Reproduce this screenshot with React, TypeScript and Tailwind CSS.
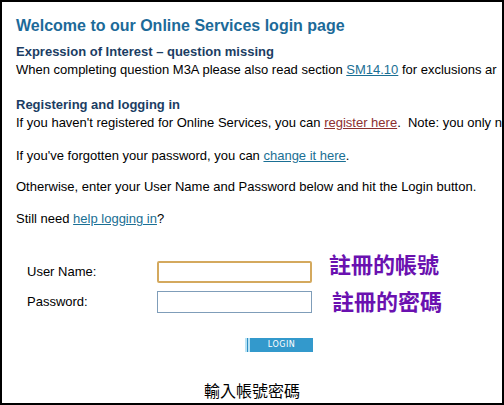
export default function App() {
  const body = "text-[13px] leading-4 text-black whitespace-nowrap";
  return (
    <div className="w-[504px] h-[405px] border-2 border-black bg-white overflow-hidden font-['Liberation_Sans',Arial,sans-serif] relative">
      <div className="pt-[14px] pl-[14px]">
        <h1 className="text-[16px] leading-5 font-bold text-[#1c6a99]">Welcome to our Online Services login page</h1>

        <h2 className="mt-[8px] text-[13px] leading-4 font-bold text-[#1b3d63]">Expression of Interest – question missing</h2>
        <p className={`mt-[2px] ${body}`}>
          When completing question M3A please also read section{' '}
          <a className="text-[#1a6f94] underline">SM14.10</a> for exclusions ar
        </p>

        <h2 className="mt-[19px] text-[13px] leading-4 font-bold text-[#1b3d63]">Registering and logging in</h2>
        <p className={`mt-[2px] ${body}`}>
          If you haven't registered for Online Services, you can{' '}
          <a className="text-[#8c2f2f] underline">register here</a>.&nbsp; Note: you only n
        </p>

        <p className={`mt-[17px] ${body}`}>
          If you've forgotten your password, you can <a className="text-[#1a6f94] underline">change it here</a>.
        </p>
        <p className={`mt-[15px] ${body}`}>
          Otherwise, enter your User Name and Password below and hit the Login button.
        </p>
        <p className={`mt-[16px] ${body}`}>
          Still need <a className="text-[#1a6f94] underline">help logging in</a>?
        </p>
      </div>

      <div className="mt-[34px] pl-[25px] flex flex-col gap-2">
        <div className="flex items-center h-[22px]">
          <label className="w-[130px] text-[13px] text-black">User Name:</label>
          <input className="w-[155px] h-[22px] border-2 border-[#d4a95e] rounded-[2px] bg-white outline-none" />
          <span className="ml-[17px] -mt-[18px] text-[22px] font-bold text-[#6a11b0] font-['Noto_Sans_CJK_TC',sans-serif] leading-6">註冊的帳號</span>
        </div>
        <div className="flex items-center h-[22px]">
          <label className="w-[130px] text-[13px] text-black">Password:</label>
          <input type="password" className="w-[155px] h-[22px] border border-[#7f9db9] bg-white outline-none" />
          <span className="ml-[20px] -mt-[4px] text-[22px] font-bold text-[#6a11b0] font-['Noto_Sans_CJK_TC',sans-serif] leading-6">註冊的密碼</span>
        </div>
      </div>

      <div className="mt-[25px] pl-[243px]">
        <button className="flex w-[68px] h-[14px] bg-[#3399cc]">
          <span className="w-[2px] h-full bg-[#b9e3f5]" />
          <span className="w-[1px] h-full bg-[#2f8fc4]" />
          <span className="w-[2px] h-full bg-[#b9e3f5]" />
          <span className="flex-1 text-center text-[8px] leading-[14px] text-white font-['DejaVu_Sans',sans-serif] tracking-[0.5px]">LOGIN</span>
        </button>
      </div>

      <div className="absolute left-0 right-0 bottom-[3px] text-center text-[16px] leading-5 text-black font-['Noto_Sans_CJK_TC',sans-serif]">
        輸入帳號密碼
      </div>
    </div>
  );
}
